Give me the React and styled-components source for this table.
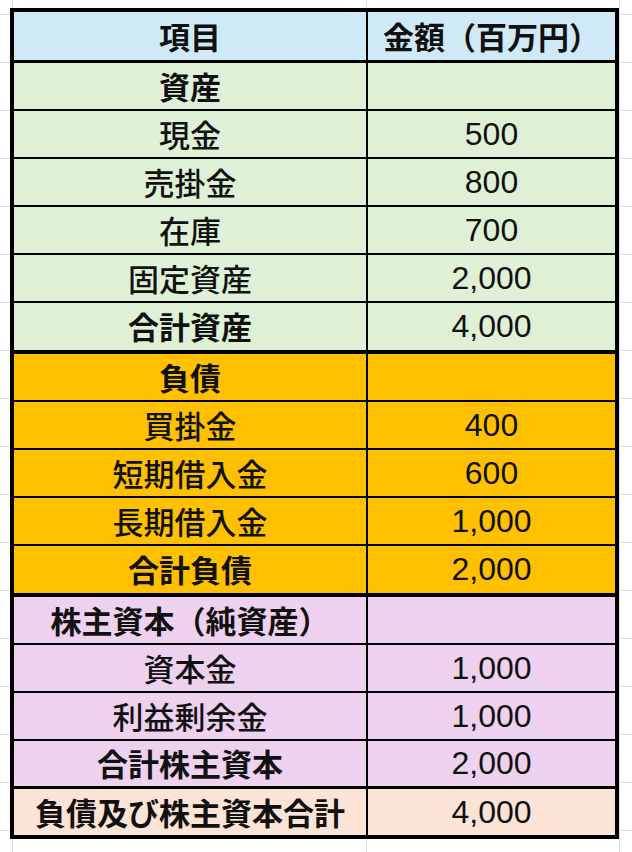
import React from 'react';
import styled, { createGlobalStyle } from 'styled-components';

const Global = createGlobalStyle`
  html, body { margin: 0; padding: 0; background: #fff; }
  body { font-family: "Liberation Sans", "Noto Sans CJK JP", sans-serif; color: #111; }
`;

const GRID = '#dcdee2';

const Sheet = styled.div`
  width: 632px;
  height: 852px;
  box-sizing: border-box;
  padding: 8px 0 0 10px;
  overflow: hidden;
  background-color: #fff;
  background-image:
    linear-gradient(to right, transparent 12px, ${GRID} 12px, ${GRID} 13px, transparent 13px),
    linear-gradient(to right, transparent 366px, ${GRID} 366px, ${GRID} 367px, transparent 367px),
    linear-gradient(to right, transparent 619px, ${GRID} 619px, ${GRID} 620px, transparent 620px),
    repeating-linear-gradient(to bottom, ${GRID} 0 1px, transparent 1px 48px);
  background-position: 0 0, 0 0, 0 0, 0 14px;
`;

const Table = styled.div`
  width: 609px;
  box-sizing: border-box;
  border: 4px solid #000;
  display: flex;
  flex-direction: column;
`;

const KINDS = {
  head: { h: 51, b: 3 },
  normal: { h: 48, b: 2 },
  end: { h: 51, b: 4 },
  sub: { h: 48, b: 3 },
  last: { h: 46, b: 0 },
};

const COLORS = {
  blue: '#cfe9f7',
  green: '#def1d6',
  gold: '#ffc000',
  pink: '#eed0ef',
  peach: '#fbe3d6',
};

const Row = styled.div`
  display: grid;
  grid-template-columns: 354px 1fr;
  box-sizing: border-box;
  height: ${(p) => KINDS[p.$kind].h}px;
  border-bottom: ${(p) => KINDS[p.$kind].b}px solid #000;
  background: ${(p) => COLORS[p.$tone]};
`;

const Cell = styled.div`
  display: flex;
  align-items: center;
  justify-content: center;
  white-space: nowrap;
  line-height: 1;
  overflow: visible;
`;

const Label = styled(Cell)`
  box-sizing: border-box;
  border-right: 2px solid #000;
  font-family: "Noto Sans CJK JP", sans-serif;
  font-size: 31px;
  font-weight: ${(p) => (p.$bold ? 700 : 500)};
  padding-bottom: 2px;
`;

const Amount = styled(Cell)`
  font-family: ${(p) => (p.$bold ? '"Noto Sans CJK JP", sans-serif' : '"Liberation Sans", Arial, sans-serif')};
  font-size: ${(p) => (p.$bold ? 31 : 32)}px;
  font-weight: ${(p) => (p.$bold ? 700 : 400)};
  padding-bottom: 1px;
`;

const rows = [
  { label: '項目', value: '金額（百万円）', tone: 'blue', kind: 'head', bold: true, headValue: true },
  { label: '資産', value: '', tone: 'green', kind: 'normal', bold: true },
  { label: '現金', value: '500', tone: 'green', kind: 'normal' },
  { label: '売掛金', value: '800', tone: 'green', kind: 'normal' },
  { label: '在庫', value: '700', tone: 'green', kind: 'normal' },
  { label: '固定資産', value: '2,000', tone: 'green', kind: 'normal' },
  { label: '合計資産', value: '4,000', tone: 'green', kind: 'end', bold: true },
  { label: '負債', value: '', tone: 'gold', kind: 'normal', bold: true },
  { label: '買掛金', value: '400', tone: 'gold', kind: 'normal' },
  { label: '短期借入金', value: '600', tone: 'gold', kind: 'normal' },
  { label: '長期借入金', value: '1,000', tone: 'gold', kind: 'normal' },
  { label: '合計負債', value: '2,000', tone: 'gold', kind: 'end', bold: true },
  { label: '株主資本（純資産）', value: '', tone: 'pink', kind: 'normal', bold: true },
  { label: '資本金', value: '1,000', tone: 'pink', kind: 'normal' },
  { label: '利益剰余金', value: '1,000', tone: 'pink', kind: 'normal' },
  { label: '合計株主資本', value: '2,000', tone: 'pink', kind: 'sub', bold: true },
  { label: '負債及び株主資本合計', value: '4,000', tone: 'peach', kind: 'last', bold: true },
];

export default function App() {
  return (
    <>
      <Global />
      <Sheet>
        <Table>
          {rows.map((r) => (
            <Row key={r.label} $kind={r.kind} $tone={r.tone}>
              <Label $bold={r.bold}>{r.label}</Label>
              <Amount $bold={r.headValue}>{r.value}</Amount>
            </Row>
          ))}
        </Table>
      </Sheet>
    </>
  );
}
